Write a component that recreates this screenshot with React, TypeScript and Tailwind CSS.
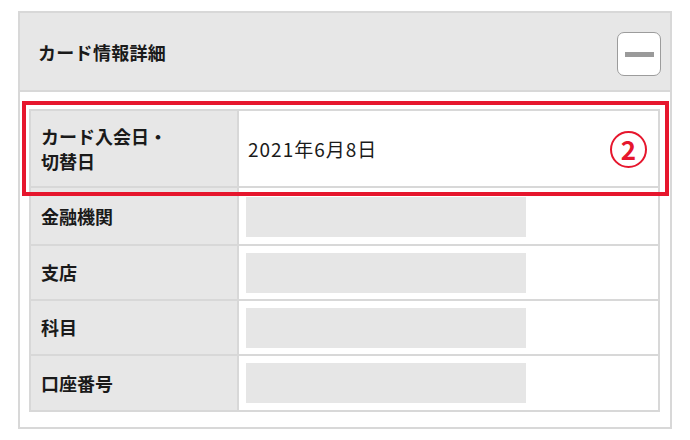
import React from 'react'

const font = { fontFamily: '"Noto Sans CJK JP", "Noto Sans", sans-serif' }

// rows below the highlighted first row
const rows = [
  { label: '金融機関', h: 'h-[56px] pt-[9px]' },
  { label: '支店', h: 'h-[53px] pt-[7px]' },
  { label: '科目', h: 'h-[53px] pt-[7px]' },
  { label: '口座番号', h: 'h-[54px] pt-[7px]' },
]

function MinusButton() {
  return (
    <div className="mt-[5px] flex h-[44px] w-[44px] items-center justify-center rounded-[7px] border border-[#9c9c9c] bg-white">
      <div className="h-[5px] w-[29px] bg-[#9a9a9a]" />
    </div>
  )
}

export default function App() {
  return (
    <div className="h-[440px] w-[690px] bg-white pl-[18px] pt-[11px] text-[#1a1a1a]" style={font}>
      <div className="relative w-[654px] border-2 border-[#d8d8d8] bg-white">
        {/* header */}
        <div className="flex h-[79px] items-center justify-between border-b-2 border-[#d8d8d8] bg-[#e7e7e7] pl-[18px] pr-[9px]">
          <span className="text-[18px] font-bold leading-none tracking-[0.3px]">カード情報詳細</span>
          <MinusButton />
        </div>

        {/* table */}
        <div className="pb-[15px] pl-[9px] pr-[10px] pt-[17px]">
          <div className="border-2 border-[#d8d8d8]">
            <div className="flex h-[77px] border-b-2 border-[#d8d8d8]">
              <div className="flex w-[208px] flex-col justify-center border-r-2 border-[#d8d8d8] bg-[#e7e7e7] pl-[10px] text-[18px] font-bold leading-[25px]">
                <span>カード入会日・</span>
                <span>切替日</span>
              </div>
              <div className="flex flex-1 items-center justify-between pl-[9px] pr-[11px]">
                <span className="text-[19px] leading-none tracking-[1px]">2021年6月8日</span>
                <span className="mt-[1px] flex h-[37px] w-[37px] items-center justify-center rounded-full border-[2.5px] border-[#e6162d] text-[26px] font-bold leading-none text-[#e6162d]">
                  2
                </span>
              </div>
            </div>
            {rows.map((r, i) => (
              <div
                key={r.label}
                className={`flex ${i < rows.length - 1 ? 'border-b-2' : ''} border-[#d8d8d8]`}
              >
                <div className="flex w-[208px] items-center border-r-2 border-[#d8d8d8] bg-[#e7e7e7] pl-[10px] text-[18px] font-bold">
                  {r.label}
                </div>
                <div className={`flex-1 pl-[7px] ${r.h}`}>
                  <div className="h-[40px] w-[280px] bg-[#e6e6e6]" />
                </div>
              </div>
            ))}
          </div>
        </div>

        {/* red highlight annotation */}
        <div className="pointer-events-none absolute left-[2px] top-[88px] h-[95px] w-[647px] border-4 border-[#e6162d]" />
      </div>
    </div>
  )
}
